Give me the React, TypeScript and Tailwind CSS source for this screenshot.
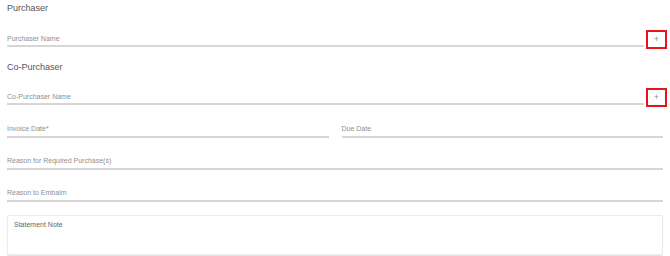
export default function App() {
  return (
    <div className="w-[670px] h-[256px] bg-white px-[7px] font-['Liberation_Sans',Arial,sans-serif] overflow-hidden">
      {/* Purchaser */}
      <div className="h-[16px] leading-[16px] text-[9px] text-[#555]">Purchaser</div>
      <div className="mt-[14px] flex items-start">
        <div className="flex-1 pt-[4px] pb-[1px] border-b-2 border-[#d6d6d6]">
          <div className="h-[10px] leading-[10px] text-[7px] text-[#8f8f8f]">Purchaser Name</div>
        </div>
        <button className="ml-[2px] -mr-[4px] w-[21px] h-[19px] border-2 border-[#e8141c] flex items-center justify-center text-[9px] leading-none text-[#8a8a8a]">
          +
        </button>
      </div>

      {/* Co-Purchaser */}
      <div className="mt-[10px] h-[16px] leading-[16px] text-[9px] text-[#555]">Co-Purchaser</div>
      <div className="mt-[13px] flex items-start">
        <div className="flex-1 pt-[4px] pb-[1px] border-b-2 border-[#d6d6d6]">
          <div className="h-[10px] leading-[10px] text-[7px] text-[#8f8f8f]">Co-Purchaser Name</div>
        </div>
        <button className="ml-[2px] -mr-[4px] w-[21px] h-[19px] border-2 border-[#e8141c] flex items-center justify-center text-[9px] leading-none text-[#8a8a8a]">
          +
        </button>
      </div>

      {/* Dates */}
      <div className="mt-[17px] flex gap-[13px]">
        <div className="flex-1 pb-[2px] border-b-2 border-[#d6d6d6]">
          <div className="h-[10px] leading-[10px] text-[7px] text-[#8f8f8f]">Invoice Date*</div>
        </div>
        <div className="flex-1 pb-[2px] border-b-2 border-[#d6d6d6]">
          <div className="h-[10px] leading-[10px] text-[7px] text-[#8f8f8f]">Due Date</div>
        </div>
      </div>

      <div className="mt-[18px] pb-[2px] border-b-2 border-[#d6d6d6]">
        <div className="h-[10px] leading-[10px] text-[7px] text-[#8f8f8f]">Reason for Required Purchase(s)</div>
      </div>

      <div className="mt-[18px] pb-[2px] border-b-2 border-[#d6d6d6]">
        <div className="h-[10px] leading-[10px] text-[7px] text-[#8f8f8f]">Reason to Embalm</div>
      </div>

      {/* Statement note */}
      <div className="mt-[13px] h-[40px] rounded-[2px] border border-[#ececec] shadow-[0_1px_1px_rgba(0,0,0,0.12)] px-[6px] pt-[4px]">
        <div className="h-[10px] leading-[10px] text-[7px] text-[#666]">Statement Note</div>
      </div>
    </div>
  )
}
